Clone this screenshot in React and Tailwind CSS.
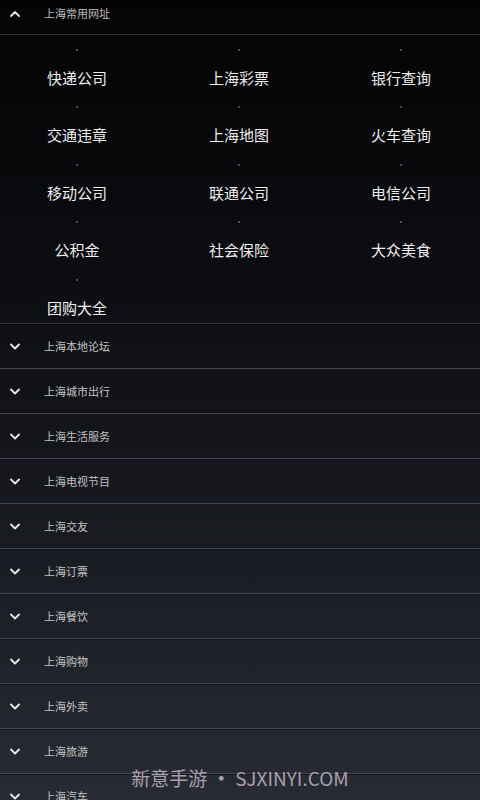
import React from "react";

const grid = [
  "快递公司", "上海彩票", "银行查询",
  "交通违章", "上海地图", "火车查询",
  "移动公司", "联通公司", "电信公司",
  "公积金", "社会保险", "大众美食",
  "团购大全",
];

const sections = [
  "上海本地论坛", "上海城市出行", "上海生活服务", "上海电视节目", "上海交友",
  "上海订票", "上海餐饮", "上海购物", "上海外卖", "上海旅游", "上海汽车",
];

const font = { fontFamily: '"Noto Sans CJK SC", "Noto Sans", sans-serif' };

function Chevron({ up }) {
  return (
    <svg width="10" height="7" viewBox="0 0 10 7" className="shrink-0">
      <polyline
        points={up ? "1,6 5,2 9,6" : "1,1.5 5,5.5 9,1.5"}
        fill="none"
        stroke="#e8e8e8"
        strokeWidth="1.8"
        strokeLinecap="round"
        strokeLinejoin="round"
      />
    </svg>
  );
}

function Divider({ top = "#44474f", bottom = "#14151a" }) {
  return (
    <div className="flex flex-col">
      <div className="h-px" style={{ background: top }} />
      <div className="h-px" style={{ background: bottom }} />
    </div>
  );
}

export default function App() {
  return (
    <div
      className="relative h-[800px] w-[480px] overflow-hidden bg-gradient-to-b from-[#040405] via-[#111317] to-[#282b34]"
      style={font}
    >
      <div className="flex h-[34px] items-center pb-[8px] pl-[10px]">
        <div className="w-[34px]">
          <Chevron up />
        </div>
        <span className="text-[11px] text-[#bdbdbd]">上海常用网址</span>
      </div>
      <div className="flex flex-col">
        <div className="h-px bg-[#2c2d31]" />
        <div className="h-px bg-[#060607]" />
      </div>
      <div className="-ml-[4px] grid h-[287px] w-[486px] grid-cols-3 content-start">
        {grid.map((t) => (
          <div key={t} className="flex h-[57.4px] flex-col items-center">
            <div className="mt-[13px] h-[2px] w-[2px] bg-[#4a4c52]" />
            <div className="mt-[17px] text-[15px] leading-[20px] text-[#efefef]">{t}</div>
          </div>
        ))}
      </div>
      <Divider top="#32343a" bottom="#0c0d10" />
      {sections.map((s) => (
        <div key={s}>
          <div className="flex h-[43px] items-center pl-[10px]">
            <div className="w-[34px]">
              <Chevron />
            </div>
            <span className="text-[11px] text-[#c2c2c2]">{s}</span>
          </div>
          <Divider />
        </div>
      ))}
      <div className="pointer-events-none absolute left-0 right-0 top-[764px] flex justify-center">
        <span
          className="text-[19px] text-[#a89fae]"
          style={{ fontFamily: '"Noto Sans CJK SC", "Open Sans", sans-serif' }}
        >
          新意手游<span className="mx-[3px] text-[22px] leading-none">•</span>SJXINYI.COM
        </span>
      </div>
    </div>
  );
}
